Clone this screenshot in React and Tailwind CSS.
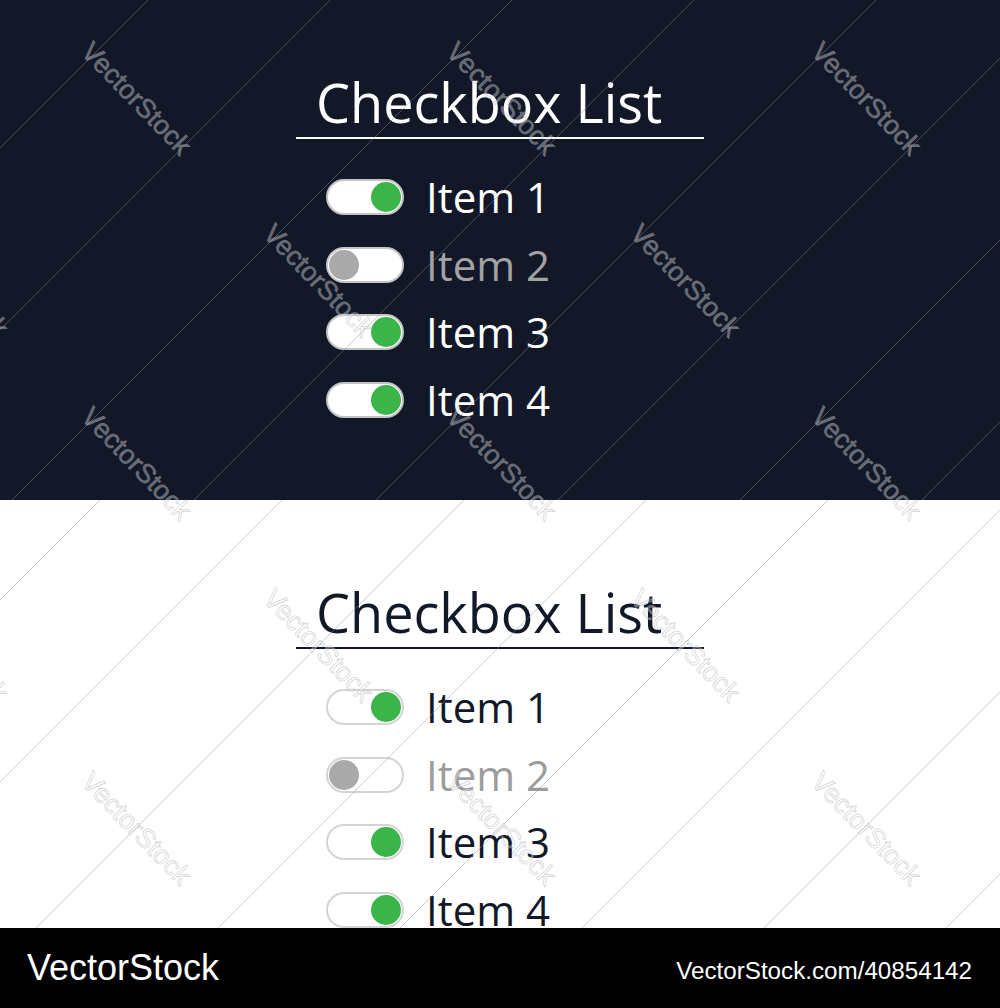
import React from "react";

const items = [
  { label: "Item 1", on: true },
  { label: "Item 2", on: false },
  { label: "Item 3", on: true },
  { label: "Item 4", on: true },
];

// stamp centres, page coordinates
const stampRows = [
  { y: 100, xs: [135, 500, 865] },
  { y: 282, xs: [-48, 317, 684, 1050] },
  { y: 465, xs: [135, 500, 865] },
  { y: 647, xs: [-48, 317, 684, 1050] },
  { y: 830, xs: [135, 500, 865] },
];

function Stamps({ top, height, firstLine }) {
  const lines = [];
  for (let c = firstLine; c < 1000 + height + 200; c += 182) lines.push(c);
  return (
    <svg
      className="absolute inset-0 pointer-events-none"
      width="1000"
      height={height}
      viewBox={`0 0 1000 ${height}`}
    >
      {lines.map((c) => (
        <line
          key={c}
          x1={c}
          y1={0}
          x2={c - 800}
          y2={800}
          stroke="#8a8f99"
          strokeOpacity="0.45"
          strokeWidth="1"
        />
      ))}
      {stampRows.map((row) =>
        row.xs.map((x) => {
          const y = row.y - top;
          if (y < -90 || y > height + 90) return null;
          return (
            <text
              key={`${x}-${row.y}`}
              x={x}
              y={y}
              textAnchor="middle"
              dominantBaseline="middle"
              transform={`rotate(46 ${x} ${y})`}
              fontFamily="'Liberation Sans', Arial, sans-serif"
              fontSize="27"
              fill="#ffffff"
              fillOpacity="0.34"
              stroke="#9a9ea6"
              strokeOpacity="0.45"
              strokeWidth="0.8"
            >
              VectorStock
            </text>
          );
        })
      )}
    </svg>
  );
}

function Toggle({ on, light }) {
  return (
    <div
      className={`w-[78px] h-9 rounded-full bg-white border-2 flex items-center px-px ${
        light ? "border-[#d4d4d4]" : "border-[#c4c4c4]"
      } ${on ? "justify-end" : "justify-start"}`}
    >
      <div
        className={`w-[30px] h-[30px] rounded-full ${
          on ? "bg-[#3bb54a]" : "bg-[#a9a9a9]"
        }`}
      />
    </div>
  );
}

function CheckboxList({ light }) {
  const text = light ? "text-[#111827]" : "text-white";
  return (
    <div className="w-[408px]" style={{ fontFamily: "'Open Sans', 'Noto Sans', sans-serif" }}>
      <div className={`border-b-2 pl-5 pb-[5px] ${light ? "border-[#111827]" : "border-white"}`}>
        <h1 className={`text-[54px] leading-[60px] font-normal ${text}`}>Checkbox List</h1>
      </div>
      <div className="mt-10 pl-[30px] flex flex-col gap-[31.5px]">
        {items.map((it) => (
          <div key={it.label} className="flex items-center gap-[22px] h-9">
            <Toggle on={it.on} light={light} />
            <span
              className={`text-[42px] leading-none ${
                it.on ? text : light ? "text-[#9c9c9c]" : "text-[#a3a3a3]"
              }`}
            >
              {it.label}
            </span>
          </div>
        ))}
      </div>
    </div>
  );
}

export default function App() {
  return (
    <div className="w-[1000px] h-[1008px] flex flex-col">
      <section className="relative h-[500px] overflow-hidden bg-[#121827] flex justify-center pt-[72px]">
        <CheckboxList />
        <Stamps top={0} height={500} firstLine={148} />
      </section>

      <section className="relative h-[428px] overflow-hidden bg-white flex justify-center pt-[82px]">
        <CheckboxList light />
        <Stamps top={500} height={428} firstLine={100} />
      </section>

      <footer
        className="h-20 bg-black flex items-center justify-between pl-[27px] pr-[28px] text-white"
        style={{ fontFamily: "'Liberation Sans', Arial, sans-serif" }}
      >
        <span className="text-[36px] leading-none">VectorStock</span>
        <span className="text-[24.2px] leading-none mt-[6px]">VectorStock.com/40854142</span>
      </footer>
    </div>
  );
}
